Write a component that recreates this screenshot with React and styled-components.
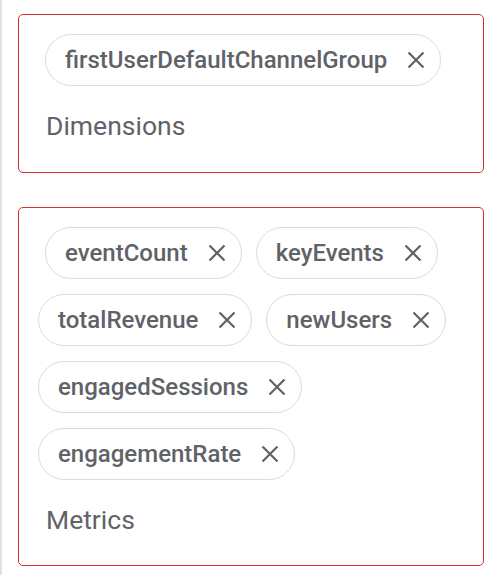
import React from "react";
import styled, { createGlobalStyle } from "styled-components";

const Global = createGlobalStyle`
  html, body { margin: 0; padding: 0; background: #fff; }
  body { font-family: Roboto, "Noto Sans", Arial, sans-serif; }
`;

const Page = styled.div`
  min-height: 575px;
  box-sizing: border-box;
  border-left: 2px solid #e2e2e2;
  padding: 14px 0 0 16px;
  display: flex;
  flex-direction: column;
  gap: 34px;
`;

const Field = styled.section`
  width: 466px;
  box-sizing: border-box;
  border: 1px solid #d32f2f;
  border-radius: 5px;
  padding: 19px 12px 0 19px;
  height: ${(p) => p.$height}px;
`;

const ChipGrid = styled.div`
  display: flex;
  flex-wrap: wrap;
  column-gap: 14px;
  row-gap: 15px;
`;

const Chip = styled.div`
  display: inline-flex;
  align-items: center;
  height: 52px;
  box-sizing: border-box;
  border: 1px solid #dadce0;
  border-radius: 26px;
  padding: 0 14px 0 19px;
  margin-left: ${(p) => (p.$first ? 7 : 0)}px;
  color: #5f6368;
  font-size: 24px;
  font-weight: 500;
`;

const ChipLabel = styled.span`
  white-space: nowrap;
`;

const RemoveButton = styled.button`
  border: 0;
  background: none;
  padding: 0;
  margin-left: 19px;
  width: 20px;
  height: 20px;
  display: flex;
  align-items: center;
  justify-content: center;
  color: #5f6368;
  cursor: pointer;
`;

const Label = styled.div`
  margin: 25px 0 0 8px;
  color: #5f6368;
  font-size: 26.5px;
  font-weight: 400;
  line-height: 30px;
`;

const CloseIcon = () => (
  <svg width="18" height="18" viewBox="0 0 18 18" fill="none">
    <path d="M1.5 1.5L16.5 16.5M16.5 1.5L1.5 16.5" stroke="currentColor" strokeWidth="2.2" strokeLinecap="butt" />
  </svg>
);

const ChipField = ({ items, label, height }) => (
  <Field $height={height}>
    <ChipGrid>
      {items.map((it, i) => (
        <Chip key={it} $first={i === 0}>
          <ChipLabel>{it}</ChipLabel>
          <RemoveButton aria-label={`Remove ${it}`}>
            <CloseIcon />
          </RemoveButton>
        </Chip>
      ))}
    </ChipGrid>
    <Label>{label}</Label>
  </Field>
);

export default function App() {
  return (
    <>
      <Global />
      <Page>
        <ChipField items={["firstUserDefaultChannelGroup"]} label="Dimensions" height={159} />
        <ChipField
          items={["eventCount", "keyEvents", "totalRevenue", "newUsers", "engagedSessions", "engagementRate"]}
          label="Metrics"
          height={359}
        />
      </Page>
    </>
  );
}
